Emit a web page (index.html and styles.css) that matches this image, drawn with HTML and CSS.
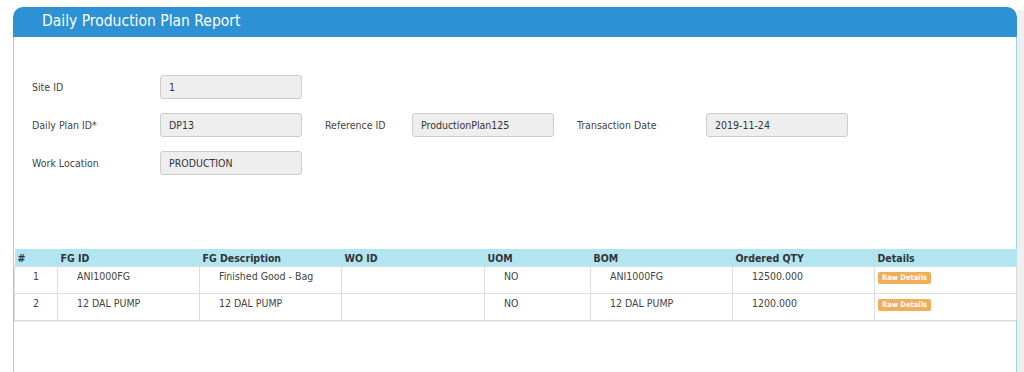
FILE: index.html
```html
<!DOCTYPE html>
<html lang="en">
<head>
<meta charset="UTF-8">
<meta name="viewport" content="width=device-width, initial-scale=1.0">
<title>Daily Production Plan Report</title>
<link rel="stylesheet" href="styles.css">
</head>
<body>
    <div class="page">
        <div class="panel">
            <div class="panel-heading">Daily Production Plan Report</div>
            <div class="panel-body">
                <div class="form">
                    <label>Site ID</label>
                    <div class="field">1</div>
                    <span class="empty"></span>
                    <span class="empty"></span>
                    <span class="empty"></span>
                    <span class="empty"></span>

                    <label>Daily Plan ID*</label>
                    <div class="field">DP13</div>
                    <label>Reference ID</label>
                    <div class="field">ProductionPlan125</div>
                    <label>Transaction Date</label>
                    <div class="field">2019-11-24</div>

                    <label>Work Location</label>
                    <div class="field">PRODUCTION</div>
                </div>

                <table class="grid">
                    <colgroup>
                        <col style="width: 43px">
                        <col style="width: 142px">
                        <col style="width: 142px">
                        <col style="width: 143px">
                        <col style="width: 106px">
                        <col style="width: 142px">
                        <col style="width: 142px">
                        <col style="width: 142px">
                    </colgroup>
                    <thead>
                        <tr>
                            <th>#</th>
                            <th>FG ID</th>
                            <th>FG Description</th>
                            <th>WO ID</th>
                            <th>UOM</th>
                            <th>BOM</th>
                            <th>Ordered QTY</th>
                            <th>Details</th>
                        </tr>
                    </thead>
                    <tbody>
                        <tr>
                            <td class="num">1</td>
                            <td>ANI1000FG</td>
                            <td>Finished Good - Bag</td>
                            <td></td>
                            <td>NO</td>
                            <td>ANI1000FG</td>
                            <td>12500.000</td>
                            <td class="action"><span class="btn-raw">Raw Details</span></td>
                        </tr>
                        <tr>
                            <td class="num">2</td>
                            <td>12 DAL PUMP</td>
                            <td>12 DAL PUMP</td>
                            <td></td>
                            <td>NO</td>
                            <td>12 DAL PUMP</td>
                            <td>1200.000</td>
                            <td class="action"><span class="btn-raw">Raw Details</span></td>
                        </tr>
                    </tbody>
                </table>
            </div>
        </div>
        <div class="gutter"></div>
    </div>
</body>
</html>
```

FILE: styles.css
```css
html, body {
    margin: 0;
    padding: 0;
    background: #fff;
    overflow: hidden;
}
body {
    font-family: "DejaVu Sans Condensed", "DejaVu Sans", sans-serif;
    font-size: 10.5px;
    color: #444;
}
.page {
    display: flex;
    height: 372px;
}
.panel {
    width: 1004px;
    margin: 7px 0 0 13px;
    display: flex;
    flex-direction: column;
}
.panel-heading {
    height: 30px;
    line-height: 29px;
    padding-left: 29px;
    background: #2d91d6;
    color: #fff;
    font-size: 15.5px;
    border-radius: 10px 10px 0 0;
}
.panel-body {
    flex: 1;
    border-left: 1px solid #8fd9ea;
    border-right: 1px solid #8fd9ea;
    padding-top: 38px;
}
.gutter {
    flex: 1;
    margin-top: 10px;
    background: #efefef;
}

/* form */
.form {
    display: grid;
    grid-template-columns: 105px 142px 64px 142px 106px 142px;
    grid-auto-rows: 24px;
    column-gap: 23px;
    row-gap: 14px;
    padding-left: 18px;
}
.form label {
    align-self: center;
    white-space: nowrap;
}
.field {
    box-sizing: border-box;
    height: 24px;
    line-height: 22px;
    padding-left: 8px;
    background: #eee;
    border: 1px solid #ccc;
    border-radius: 3px;
    color: #333;
}

/* table */
.grid {
    margin-top: 74px;
    width: 1002px;
    table-layout: fixed;
    border-collapse: collapse;
    box-shadow: 0 1px 1px rgba(0, 0, 0, 0.08);
}
.grid th {
    height: 17px;
    padding: 0 3px;
    background: #b2e5f2;
    color: #333;
    font-weight: bold;
    font-size: 10.5px;
    text-align: left;
}
.grid td {
    height: 27px;
    padding: 3px 0 0 19px;
    vertical-align: top;
    border: 1px solid #ddd;
    color: #444;
    box-sizing: border-box;
}
.grid td.num {
    padding-left: 0;
    text-align: center;
}
.grid td.action {
    padding: 3px 0 0 3px;
}
.btn-raw {
    display: inline-block;
    width: 53px;
    height: 12px;
    line-height: 12px;
    text-align: center;
    background: #f0ad5a;
    border-radius: 2px;
    color: #fff;
    font-weight: bold;
    font-size: 7.5px;
}
```
